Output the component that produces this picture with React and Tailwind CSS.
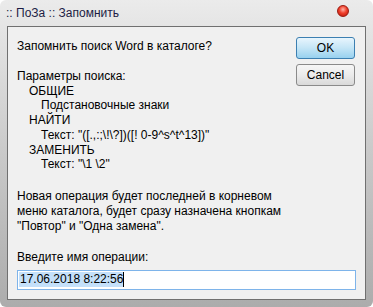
export default function App() {
  const params = [
    { text: 'Параметры поиска:', pad: '' },
    { text: 'ОБЩИЕ', pad: 'pl-[12px]' },
    { text: 'Подстановочные знаки', pad: 'pl-[24px]' },
    { text: 'НАЙТИ', pad: 'pl-[12px]' },
    { text: 'Текст: "([.,:;\\!\\?])([! 0-9^s^t^13])"', pad: 'pl-[24px]' },
    { text: 'ЗАМЕНИТЬ', pad: 'pl-[12px]' },
    { text: 'Текст: "\\1 \\2"', pad: 'pl-[24px]' },
  ];

  return (
    <div className="w-[373px] h-[307px] bg-white" style={{ fontFamily: '"Liberation Sans", Arial, sans-serif' }}>
      <div className="w-full h-full rounded-[6px] bg-gradient-to-b from-[#ebebeb] via-[#c9c9c9] to-[#acacac] flex flex-col">
        {/* title bar */}
        <div className="h-[26px] flex items-start justify-between px-[6px]">
          <span className="text-[12px] leading-[15px] mt-[6px] text-[#1c1c44] whitespace-pre">:: ПоЗа :: Запомнить</span>
          <span className="mt-[5px] mr-[18px] w-[12px] h-[12px] rounded-full border border-[#9a1a10] bg-[radial-gradient(circle_at_50%_35%,#ffb3a8_0%,#f0402c_45%,#b81408_100%)]" />
        </div>

        {/* client area */}
        <div className="mx-[7px] mb-[7px] flex-1 border border-[#707070] bg-[#f0f0f0] px-[9px] text-[12px] text-black flex flex-col">
          <div className="flex">
            <div className="flex-1 pt-[12px]">
              <div className="leading-[15px]">Запомнить поиск Word в каталоге?</div>
              <div className="mt-[15px] leading-[14.7px]">
                {params.map((p, i) => (
                  <div key={i} className={`${p.pad} whitespace-pre`}>{p.text}</div>
                ))}
              </div>
              <div className="mt-[17px] leading-[15px]">
                <div>Новая операция будет последней в корневом</div>
                <div>меню каталога, будет сразу назначена кнопкам</div>
                <div>"Повтор" и "Одна замена".</div>
              </div>
            </div>
            <div className="pt-[10px] mr-[1px] flex flex-col gap-[5px]">
              <div className="w-[59px] h-[22px] rounded-[3px] border border-[#3c7fb1] bg-gradient-to-b from-[#e8f5fd] via-[#c4e5f6] to-[#98d1ef] flex items-center justify-center text-[12px] leading-none">
                OK
              </div>
              <div className="w-[59px] h-[22px] rounded-[3px] border border-[#8a8a8a] bg-gradient-to-b from-[#f6f6f6] via-[#ebebeb] to-[#d9d9d9] flex items-center justify-center text-[12px] leading-none">
                Cancel
              </div>
            </div>
          </div>

          <div className="mt-[16px] leading-[15px]">Введите имя операции:</div>
          <div className="mt-[5px] h-[20px] border border-[#7eb4ea] bg-white flex items-center px-[1px]">
            <span className="bg-[#c4e0fa] leading-[15px] pl-[1px]">17.06.2018 8:22:56</span>
            <span className="w-[1px] h-[15px] bg-black" />
          </div>
        </div>
      </div>
    </div>
  );
}
